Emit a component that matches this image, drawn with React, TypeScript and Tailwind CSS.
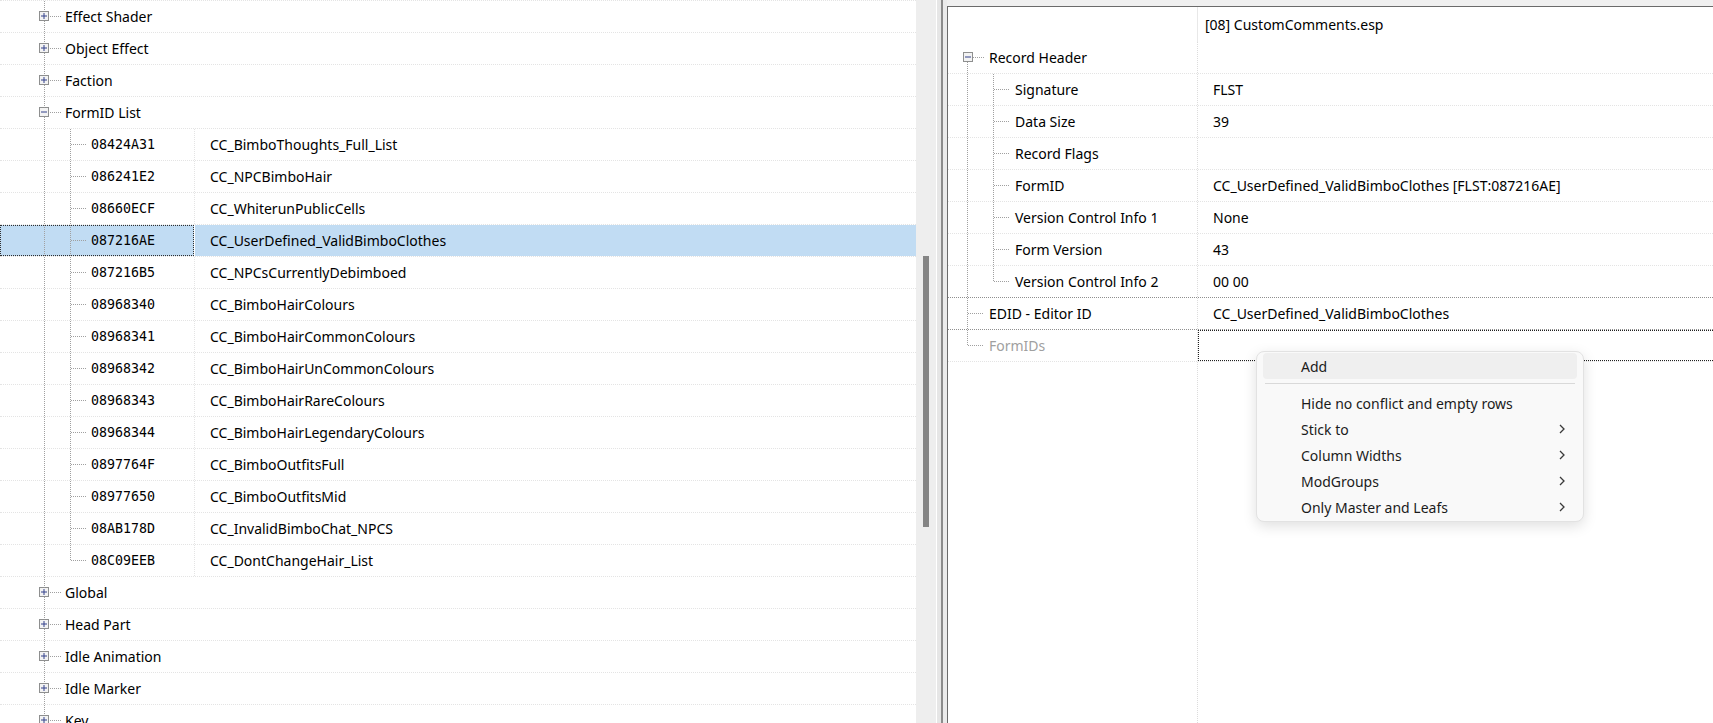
import React from "react"

const sans = "font-['Noto_Sans',sans-serif]"
const mono = "font-['DejaVu_Sans_Mono',monospace]"

const LINE = "#a0a0a0"

// tree connector drawings
const Box = ({ x, y, open }: { x: number; y: number; open: boolean }) => (
    <g>
        <rect x={x + 0.5} y={y + 0.5} width={9} height={9} fill="#f3f3f3" stroke="#8e8f8f" />
        <line x1={x + 2} y1={y + 5} x2={x + 8} y2={y + 5} stroke="#33418a" strokeWidth={1} />
        {!open && <line x1={x + 5} y1={y + 2} x2={x + 5} y2={y + 8} stroke="#33418a" strokeWidth={1} />}
    </g>
)

const VLine = ({ x, y1, y2 }: { x: number; y1: number; y2: number }) => (
    <line x1={x + 0.5} y1={y1} x2={x + 0.5} y2={y2} stroke={LINE} strokeDasharray="1 1" />
)
const HLine = ({ y, x1, x2 }: { y: number; x1: number; x2: number }) => (
    <line x1={x1} y1={y + 0.5} x2={x2} y2={y + 0.5} stroke={LINE} strokeDasharray="1 1" />
)

const LeftRootGuide = ({ open }: { open: boolean }) => (
    <svg width={65} height={31} className="shrink-0">
        <VLine x={44} y1={0} y2={31} />
        <HLine y={15} x1={50} x2={61} />
        <Box x={39} y={10} open={open} />
    </svg>
)

const LeftChildGuide = ({ last }: { last: boolean }) => (
    <svg width={91} height={31} className="shrink-0">
        <VLine x={44} y1={0} y2={31} />
        <VLine x={70} y1={0} y2={last ? 16 : 31} />
        <HLine y={15} x1={71} x2={86} />
    </svg>
)

const RightGuide = ({ kind }: { kind: "box" | "mid" | "end" | "child" | "childEnd" }) => {
    const child = kind === "child" || kind === "childEnd"
    return (
        <svg width={child ? 67 : 41} height={31} className="shrink-0">
            {kind === "box" && <VLine x={19} y1={20} y2={31} />}
            {kind === "box" && <HLine y={15} x1={25} x2={36} />}
            {kind === "box" && <Box x={15} y={10} open={true} />}
            {(kind === "mid" || child) && <VLine x={19} y1={0} y2={31} />}
            {kind === "end" && <VLine x={19} y1={0} y2={16} />}
            {(kind === "mid" || kind === "end") && <HLine y={15} x1={20} x2={36} />}
            {child && <VLine x={45} y1={0} y2={kind === "childEnd" ? 16 : 31} />}
            {child && <HLine y={15} x1={46} x2={62} />}
        </svg>
    )
}

const formIds = [
    ["08424A31", "CC_BimboThoughts_Full_List"],
    ["086241E2", "CC_NPCBimboHair"],
    ["08660ECF", "CC_WhiterunPublicCells"],
    ["087216AE", "CC_UserDefined_ValidBimboClothes"],
    ["087216B5", "CC_NPCsCurrentlyDebimboed"],
    ["08968340", "CC_BimboHairColours"],
    ["08968341", "CC_BimboHairCommonColours"],
    ["08968342", "CC_BimboHairUnCommonColours"],
    ["08968343", "CC_BimboHairRareColours"],
    ["08968344", "CC_BimboHairLegendaryColours"],
    ["0897764F", "CC_BimboOutfitsFull"],
    ["08977650", "CC_BimboOutfitsMid"],
    ["08AB178D", "CC_InvalidBimboChat_NPCS"],
    ["08C09EEB", "CC_DontChangeHair_List"],
]

const rowLine = "border-t border-dotted border-[#e4e4e4]"

const RootRow = ({ label, open = false }: { label: string; open?: boolean }) => (
    <div className={`flex h-8 shrink-0 items-center ${rowLine}`}>
        <LeftRootGuide open={open} />
        <span className="text-[14px] text-black">{label}</span>
    </div>
)

const ChildRow = ({ id, name, last, selected }: { id: string; name: string; last: boolean; selected: boolean }) => (
    <div className={`flex h-8 shrink-0 ${rowLine}`}>
        {selected ? (
            <>
                <div className="flex w-[194px] items-center bg-[#c1dcf3] outline-1 outline-dotted -outline-offset-1 outline-[#303030]">
                    <LeftChildGuide last={last} />
                    <span className={`${mono} text-[13.3px] text-black`}>{id}</span>
                </div>
                <div className="w-px bg-white" />
                <div className="flex flex-1 items-center bg-[#c1dcf3] pl-[15px] text-[14px] text-black">{name}</div>
            </>
        ) : (
            <>
                <div className="flex w-[195px] items-center border-r border-dotted border-[#e4e4e4]">
                    <LeftChildGuide last={last} />
                    <span className={`${mono} text-[13.3px] text-black`}>{id}</span>
                </div>
                <div className="flex flex-1 items-center pl-[15px] text-[14px] text-black">{name}</div>
            </>
        )}
    </div>
)

type RightRowProps = {
    label: string
    value?: string
    kind: "box" | "mid" | "end" | "child" | "childEnd"
    bottom?: string
    muted?: boolean
    focus?: boolean
}

const RightRow = ({ label, value, kind, bottom = "border-[#e4e4e4]", muted, focus }: RightRowProps) => (
    <div className={`flex h-8 shrink-0 border-b border-dotted ${bottom}`}>
        <div className="flex w-[250px] items-center border-r border-dotted border-[#dcdcdc]">
            <RightGuide kind={kind} />
            <span className={`text-[14px] ${muted ? "text-[#a0a0a0]" : "text-black"}`}>{label}</span>
        </div>
        <div className={`flex flex-1 items-center pl-[15px] text-[14px] text-black ${focus ? "-mr-1 outline-1 outline-dotted -outline-offset-1 outline-[#202020]" : ""}`}>
            {value}
        </div>
    </div>
)

const Chevron = () => (
    <svg width={6} height={10} className="shrink-0">
        <polyline points="1,1 5,5 1,9" fill="none" stroke="#3a3a3a" strokeWidth={1.3} />
    </svg>
)

const MenuItem = ({ label, sub, active }: { label: string; sub?: boolean; active?: boolean }) => (
    <div className={`mx-[6px] flex h-[26px] items-center justify-between rounded-[4px] pl-[38px] pr-[12px] text-[14px] text-[#1b1b1b] ${active ? "bg-[#efefef]" : ""}`}>
        <span>{label}</span>
        {sub && <Chevron />}
    </div>
)

export default function App() {
    return (
        <div className={`relative flex h-[723px] w-full overflow-hidden bg-[#f0f0f0] ${sans}`}>
            {/* left tree */}
            <div className="flex w-[916px] shrink-0 flex-col overflow-hidden bg-white">
                <RootRow label="Effect Shader" />
                <RootRow label="Object Effect" />
                <RootRow label="Faction" />
                <RootRow label="FormID List" open />
                {formIds.map(([id, name], index) => (
                    <ChildRow key={id} id={id} name={name} last={index === formIds.length - 1} selected={id === "087216AE"} />
                ))}
                <RootRow label="Global" />
                <RootRow label="Head Part" />
                <RootRow label="Idle Animation" />
                <RootRow label="Idle Marker" />
                <RootRow label="Key" />
            </div>

            {/* scrollbar */}
            <div className="w-[20px] shrink-0 bg-[#eeeeee]">
                <div className="ml-[7px] mt-[256px] h-[271px] w-[6px] bg-[#858585]" />
            </div>

            {/* splitter */}
            <div className="flex shrink-0">
                <div className="w-px bg-white" />
                <div className="w-[4px] bg-[#e6e6e6]" />
                <div className="w-[2px] bg-[#8c8c8c]" />
                <div className="w-[4px] bg-[#ebebeb]" />
            </div>

            {/* record view */}
            <div className="flex flex-1 flex-col pt-[6px]">
                <div className="flex flex-1 flex-col border-l border-t border-[#6b6b6b] bg-white">
                    <div className="flex h-[35px] shrink-0">
                        <div className="w-[250px] border-r border-[#e8e8e8]" />
                        <div className="flex flex-1 items-center pl-[7px] text-[14px] text-black">[08] CustomComments.esp</div>
                    </div>
                    <RightRow label="Record Header" kind="box" />
                    <RightRow label="Signature" value="FLST" kind="child" />
                    <RightRow label="Data Size" value="39" kind="child" />
                    <RightRow label="Record Flags" kind="child" />
                    <RightRow label="FormID" value="CC_UserDefined_ValidBimboClothes [FLST:087216AE]" kind="child" />
                    <RightRow label="Version Control Info 1" value="None" kind="child" />
                    <RightRow label="Form Version" value="43" kind="child" />
                    <RightRow label="Version Control Info 2" value="00 00" kind="childEnd" bottom="border-[#8f8f8f]" />
                    <RightRow label="EDID - Editor ID" value="CC_UserDefined_ValidBimboClothes" kind="mid" bottom="border-[#8f8f8f]" />
                    <RightRow label="FormIDs" kind="end" muted focus />
                    <div className="flex flex-1">
                        <div className="w-[250px] border-r border-dotted border-[#dcdcdc]" />
                    </div>
                </div>
            </div>

            {/* context menu */}
            <div className="absolute left-[1256px] top-[351px] w-[328px] rounded-[8px] border border-[#e2e2e2] bg-[#f9f9f9] py-px shadow-[0_4px_14px_rgba(0,0,0,0.13)]">
                <MenuItem label="Add" active />
                <div className="mx-[8px] mb-[6px] mt-[4px] h-px bg-[#d9d9d9]" />
                <MenuItem label="Hide no conflict and empty rows" />
                <MenuItem label="Stick to" sub />
                <MenuItem label="Column Widths" sub />
                <MenuItem label="ModGroups" sub />
                <MenuItem label="Only Master and Leafs" sub />
            </div>
        </div>
    )
}
